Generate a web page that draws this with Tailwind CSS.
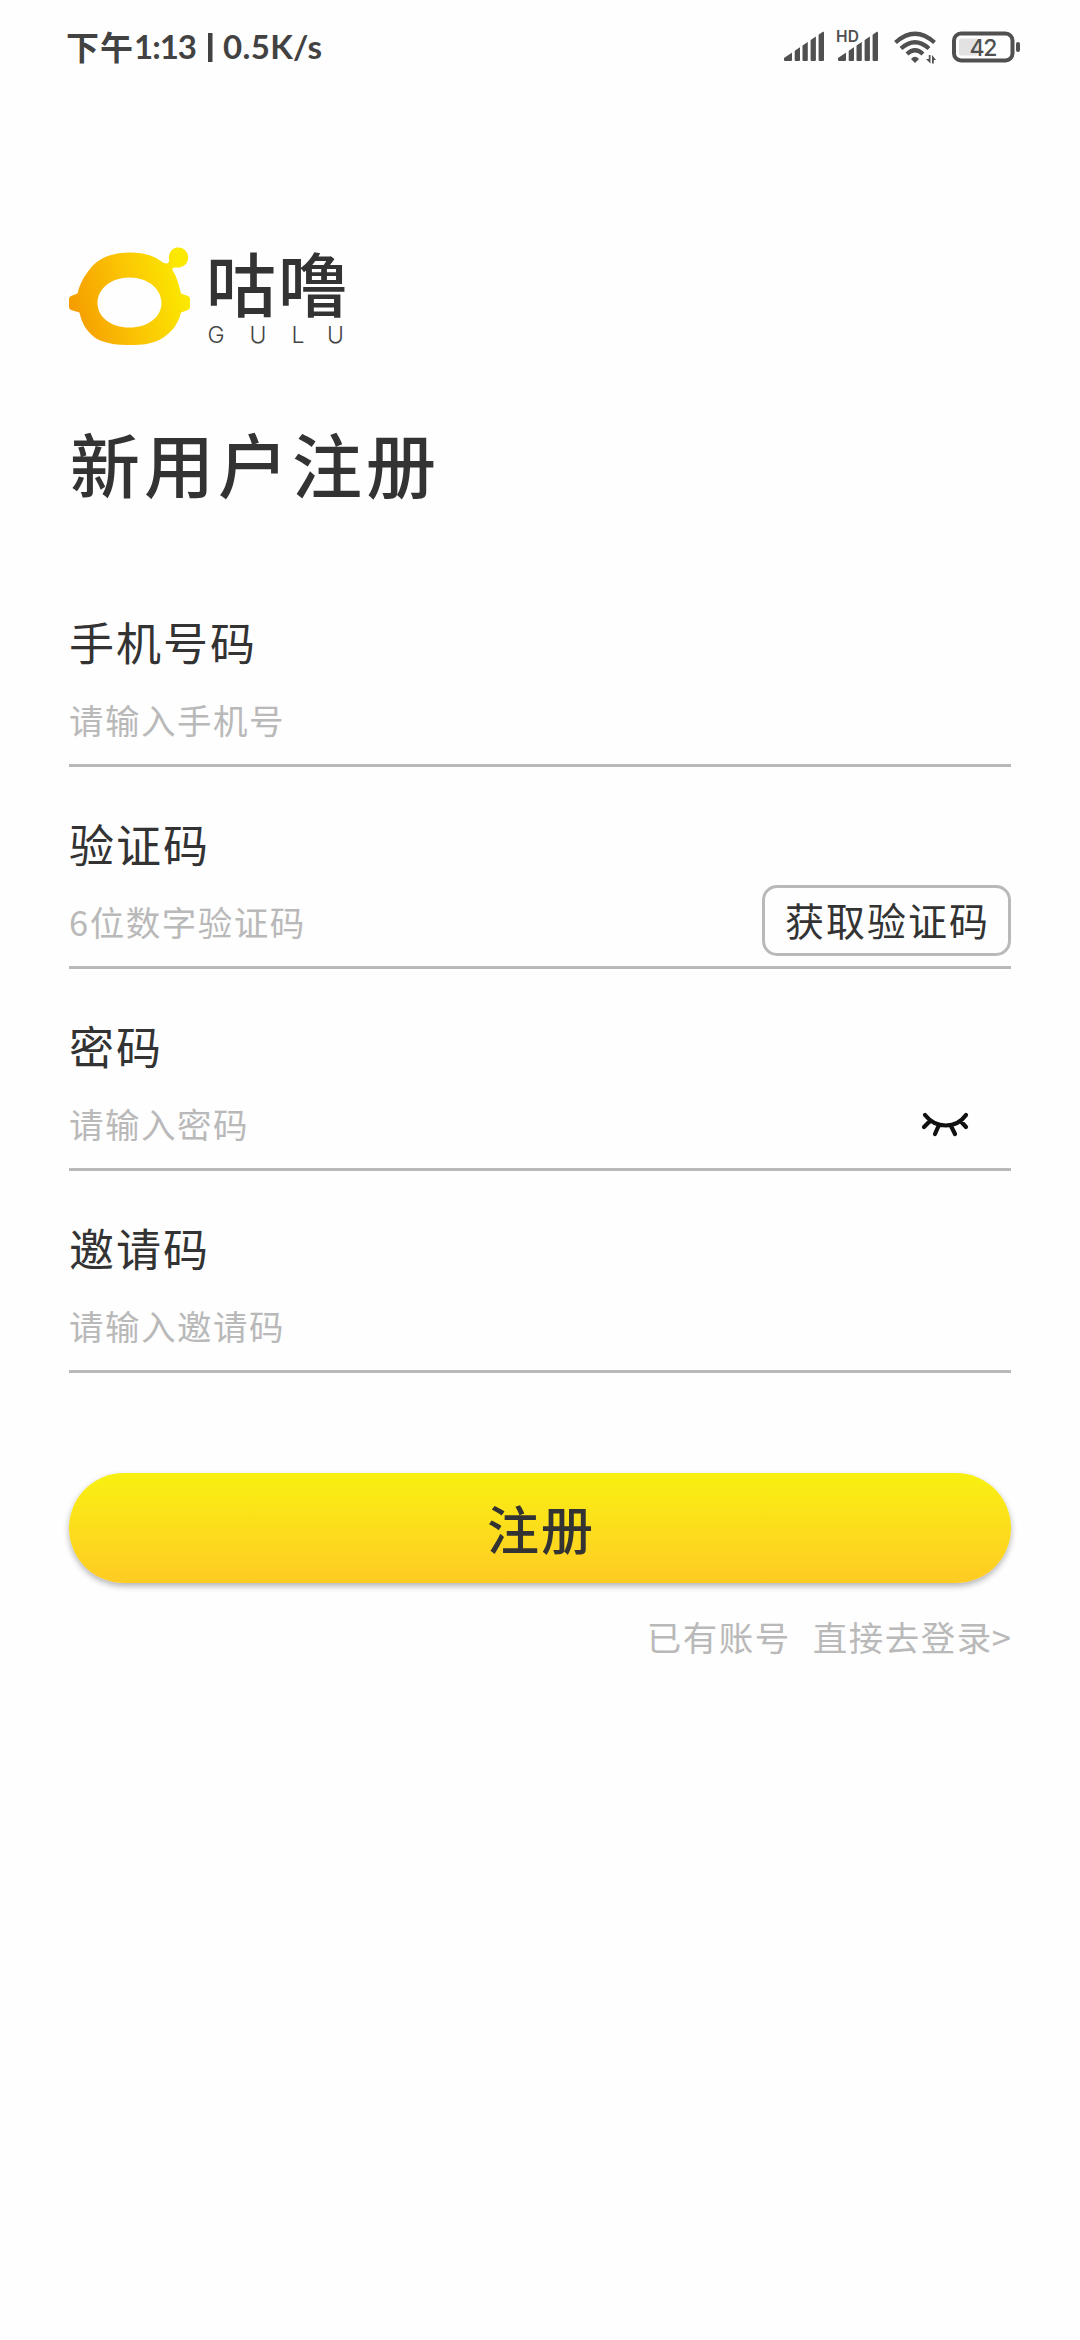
<!DOCTYPE html>
<html lang="zh-CN">
<head>
<meta charset="utf-8">
<title>新用户注册</title>
<script src="https://cdn.jsdelivr.net/npm/@tailwindcss/browser@4"></script>
</head>
<body class="bg-[#fefefe]">
<div class="flex h-[2340px] w-[1080px] flex-col overflow-hidden bg-[#fefefe] font-['Noto_Sans_CJK_SC',sans-serif] text-[#333333]">
  <header class="flex h-[94px] items-center justify-between pl-[66px] pr-[59px]">
    <svg class="block h-[94px] w-[270px]" viewBox="66 0 270 94" fill="#424242" font-size="33" font-weight="500">
      <text x="66" y="60" font-weight="700" textLength="67">下午</text>
      <text x="134" y="59" font-family="Lato" font-weight="700" textLength="63">1:13</text>
      <rect x="208" y="33" width="4.500" height="29"/>
      <text x="223" y="59" font-family="Lato" font-weight="700" textLength="99">0.5K/s</text>
    </svg>
    <svg class="block h-[94px] w-[241px]" viewBox="780 0 241 94" fill="#505050">
      <defs>
        <clipPath id="ramp"><path d="M0 26.500L40-.5V30H0z"/></clipPath>
        <g id="signal" clip-path="url(#ramp)">
          <rect width="8" height="29.500" rx="1"/><rect x="10.700" width="5.300" height="29.500" rx="1"/><rect x="18.500" width="5.300" height="29.500" rx="1"/><rect x="26.600" width="5.300" height="29.500" rx="1"/><rect x="34.600" width="5.400" height="29.500" rx="1"/>
        </g>
      </defs>
      <use href="#signal" x="784" y="31.500"/>
      <use href="#signal" x="838" y="31.500"/>
      <path d="M836 28h24v14.500h-24z" fill="#fefefe"/>
      <text x="836" y="42" font-family="Inter" font-size="15.500" font-weight="600" textLength="23">HD</text>
      <g fill="none" stroke="#505050" stroke-width="4.200">
        <path d="M895.500 42.500Q915 25 934.500 42.500M901 48.500Q915 36 929 48.500M907 54Q915 46.500 923 54"/>
      </g>
      <path d="M911 59Q915 54.500 919 59L915 63z"/>
      <path d="M926 59h2.800v-4h1.700v8.500zM932 63.500V55l4 5h-2.200v3.500z"/>
      <rect x="954" y="33.500" width="58.500" height="27" rx="7" fill="none" stroke="#505050" stroke-width="4"/>
      <rect x="959" y="38.500" width="19" height="17" rx="2" fill="#e2e2e2"/>
      <rect x="1016" y="42" width="4" height="10" rx="2"/>
      <text x="983.500" y="55.500" font-family="Inter" font-size="23" font-weight="500" text-anchor="middle" textLength="28">42</text>
    </svg>
  </header>

  <main class="flex flex-col px-[69px]">
    <svg class="mt-[126px] block h-[130px] w-[290px]" viewBox="69 220 290 130" aria-label="咕噜 GULU">
      <defs>
        <linearGradient id="lemon" gradientUnits="userSpaceOnUse" x1="72" y1="315" x2="185" y2="285">
          <stop offset="0" stop-color="#f59c00"/><stop offset=".5" stop-color="#fbc404"/><stop offset="1" stop-color="#fbe900"/>
        </linearGradient>
      </defs>
      <path fill="url(#lemon)" fill-rule="evenodd" d="M69 299Q69 297 71 296L77.500 293.500C80 283 85 275 90 269C99 257 114 252.500 130 252.500C142 252.500 152 255 160 260.500C164 263.500 167 264.500 168.500 262.500C170 260 168.500 259 169 256C170 250 174 247.500 178.700 247.500C184 247.500 188.200 252 188.200 257.500C188.200 263 184 267 178.700 267.500C175 267.800 171.500 267 172.500 270C177 277 179 285 181 293.500L188 296Q190 297 190 299V307Q190 309 188 310L181 312.500C178 325 171 333 161 339C152 344 142 345 130 345C118 345 107 344 97 339C88 333 82 325 79.500 312.500L71 310Q69 309 69 307ZM129.500 277.500C111 277.500 97.500 289 97.500 303C97.500 317 111 327.500 129.500 327.500C148 327.500 161.500 317 161.500 303C161.500 289 148 277.500 129.500 277.500Z"/>
      <text y="311.500" font-size="70" font-weight="500" fill="#333"><tspan x="206">咕</tspan><tspan x="278">噜</tspan></text>
      <text x="207.500 249.500 291.500 327" y="343" font-family="Inter" font-size="23" font-weight="300" fill="#444">GULU</text>
    </svg>

    <h1 class="mt-[60px] h-[106px] pl-px text-[70px] leading-[106px] font-medium tracking-[4px]">新用户注册</h1>

    <form class="mt-[49px] flex flex-col">
      <div class="flex h-[202px] flex-col border-b-3 border-[#b9b9b9] pt-[42px]">
        <label class="h-[70px] text-[45px] leading-[70px] tracking-[2px]">手机号码</label>
        <div class="mt-[16px] h-[52px] text-[34.500px] leading-[52px] tracking-[1.500px] text-[#b9b9b9]">请输入手机号</div>
      </div>
      <div class="flex h-[202px] justify-between border-b-3 border-[#b9b9b9]">
        <div class="flex flex-col pt-[42px]">
          <label class="h-[70px] text-[45px] leading-[70px] tracking-[2px]">验证码</label>
          <div class="mt-[16px] h-[52px] text-[34.500px] leading-[52px] tracking-[1.500px] text-[#b9b9b9]">6位数字验证码</div>
        </div>
        <button type="button" class="mt-[118px] flex h-[71px] w-[249px] items-center justify-center rounded-[15px] border-3 border-[#b9b9b9] pb-[2px] pl-[2px] text-[39px] leading-none tracking-[2px]">获取验证码</button>
      </div>
      <div class="flex h-[202px] justify-between border-b-3 border-[#b9b9b9]">
        <div class="flex flex-col pt-[42px]">
          <label class="h-[70px] text-[45px] leading-[70px] tracking-[2px]">密码</label>
          <div class="mt-[16px] h-[52px] text-[34.500px] leading-[52px] tracking-[1.500px] text-[#b9b9b9]">请输入密码</div>
        </div>
        <svg class="mt-[141px] mr-[41px] block h-[28px] w-[50px]" viewBox="920 1110 50 28" fill="none" stroke="#111" stroke-width="4.200" stroke-linecap="round">
          <path d="M925 1115C936 1129 956 1129 966 1115M930 1121L924 1127M938.500 1126L935 1134M951 1126L955 1134M960.500 1121L966 1127"/>
        </svg>
      </div>
      <div class="flex h-[202px] flex-col border-b-3 border-[#b9b9b9] pt-[42px]">
        <label class="h-[70px] text-[45px] leading-[70px] tracking-[2px]">邀请码</label>
        <div class="mt-[16px] h-[52px] text-[34.500px] leading-[52px] tracking-[1.500px] text-[#b9b9b9]">请输入邀请码</div>
      </div>
      <button type="submit" class="mt-[100px] flex h-[110px] items-center justify-center rounded-full bg-linear-to-b from-[#f8f00f] to-[#ffcb23] pl-[2px] text-[52px] leading-none font-medium tracking-[2px] shadow-[0_3px_6px_rgba(0,0,0,0.3)]">注册</button>
    </form>
    <div class="mt-[27px] flex h-[52px] justify-end gap-[22px] text-[34.500px] leading-[52px] tracking-[1.500px] text-[#b9b9b9]">
      <span>已有账号</span><a class="-mr-[1.500px] flex">直接去登录<span class="-ml-px">&gt;</span></a>
    </div>
  </main>
</div>
</body>
</html>
